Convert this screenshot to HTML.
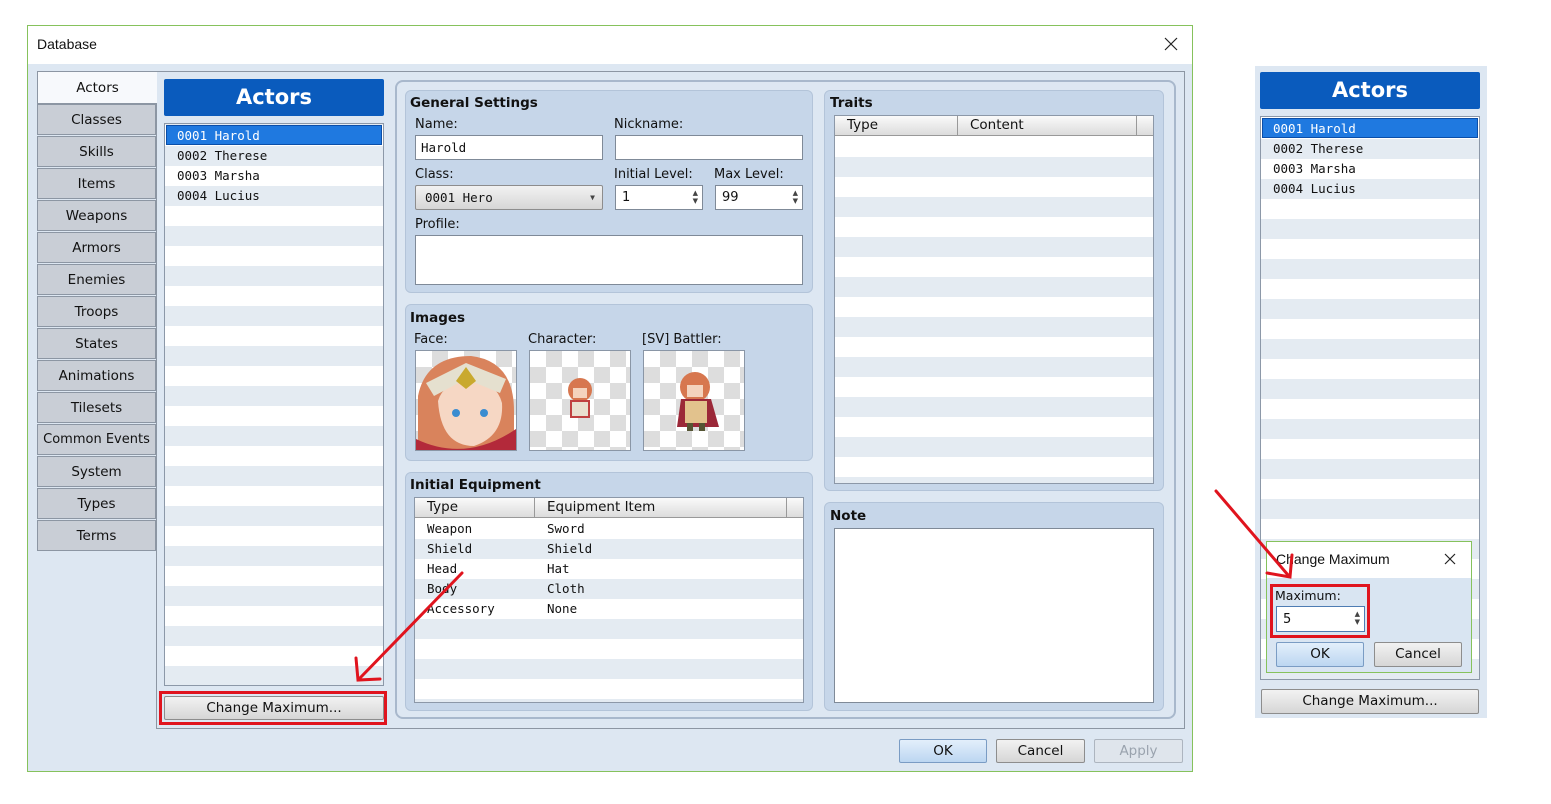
<!DOCTYPE html>
<html><head><meta charset="utf-8"><style>
*{box-sizing:border-box;margin:0;padding:0}
body{width:1551px;height:804px;background:#fff;position:relative;overflow:hidden;font-family:"DejaVu Sans","Liberation Sans",sans-serif;font-size:13px;color:#111}
.a{position:absolute}
.mono{font-family:"DejaVu Sans Mono","Liberation Mono",monospace;font-size:12.5px}
.tab{position:absolute;left:37px;width:119px;height:31px;background:#c9ced6;border:1px solid #8c96a3;text-align:center;line-height:30px;font-size:13.5px}
.hdr{background:#0a5bbd;color:#fff;font-weight:bold;font-size:21px;text-align:center;border-radius:2px}
.list{background:repeating-linear-gradient(#fff 0 20px,#e4ebf2 20px 40px);border:1px solid #8c98a8}
.grp{background:#c6d6e9;border-radius:6px;border:1px solid #b3c4d9}
.gt{font-weight:bold;font-size:13.5px}
.inp{background:#fff;border:1px solid #7f8a98}
.btn{background:linear-gradient(#f2f2f2,#d6d6d6);border:1px solid #8d8d8d;text-align:center;font-size:13.5px;border-radius:2px}
.bb{background:linear-gradient(#e3effb,#bcd6f1);border:1px solid #7a9cc4}
.th{background:linear-gradient(#fafafa,#dcdcdc);border-bottom:1px solid #999;height:20px;font-size:13.5px}
.spin{position:absolute;right:4px;top:3px;font-size:7px;line-height:8px;color:#444}
.chk{background-color:#fff;background-image:linear-gradient(45deg,#ddd 25%,transparent 25%,transparent 75%,#ddd 75%),linear-gradient(45deg,#ddd 25%,transparent 25%,transparent 75%,#ddd 75%);background-size:32px 32px;background-position:0 0,16px 16px;border:1px solid #8a96a6}
</style></head><body>
<div class="a" style="left:27px;top:25px;width:1166px;height:747px;border:1px solid #86c25c;background:#dde7f2"></div>
<div class="a" style="left:28px;top:26px;width:1164px;height:38px;background:#fff"></div>
<div class="a" style="left:37px;top:36px;font-size:14px;font-family:'Liberation Sans',sans-serif">Database</div>
<svg class="a" style="left:1164px;top:37px" width="14" height="14"><path d="M1 1L13 13M13 1L1 13" stroke="#222" stroke-width="1.2"/></svg>
<div class="a" style="left:156px;top:71px;width:1029px;height:658px;border:1px solid #8c96a3;background:#dde7f2"></div>
<div class="a" style="left:37px;top:71px;width:120px;height:33px;background:#f7f9fc;border:1px solid #8c96a3;border-right:none;text-align:center;line-height:32px;font-size:13.5px">Actors</div>
<div class="tab" style="top:104px">Classes</div>
<div class="tab" style="top:136px">Skills</div>
<div class="tab" style="top:168px">Items</div>
<div class="tab" style="top:200px">Weapons</div>
<div class="tab" style="top:232px">Armors</div>
<div class="tab" style="top:264px">Enemies</div>
<div class="tab" style="top:296px">Troops</div>
<div class="tab" style="top:328px">States</div>
<div class="tab" style="top:360px">Animations</div>
<div class="tab" style="top:392px">Tilesets</div>
<div class="tab" style="top:424px;font-size:13px">Common Events</div>
<div class="tab" style="top:456px">System</div>
<div class="tab" style="top:488px">Types</div>
<div class="tab" style="top:520px">Terms</div>
<div class="a hdr" style="left:164px;top:79px;width:220px;height:37px;line-height:37px">Actors</div>
<div class="a list" style="left:164px;top:123px;width:220px;height:563px;background-position:0 2px"></div>
<div class="a" style="left:166px;top:125px;width:216px;height:20px;background:#1f79e0;border:1px solid #0a4ea8"></div>
<div class="a mono" style="left:177px;top:126px;line-height:20px;color:#fff">0001 Harold</div>
<div class="a mono" style="left:177px;top:146px;line-height:20px">0002 Therese<br>0003 Marsha<br>0004 Lucius</div>
<div class="a btn" style="left:164px;top:696px;width:220px;height:24px;line-height:22px">Change Maximum...</div>
<div class="a" style="left:159px;top:691px;width:228px;height:34px;border:3px solid #e0141e"></div>
<div class="a" style="left:395px;top:80px;width:781px;height:639px;border:2px solid #a8b8cc;border-radius:8px;background:#dde7f2"></div>
<div class="a grp" style="left:405px;top:90px;width:408px;height:203px"></div>
<div class="a gt" style="left:410px;top:95px">General Settings</div>
<div class="a" style="left:415px;top:117px">Name:</div>
<div class="a" style="left:614px;top:117px">Nickname:</div>
<div class="a inp mono" style="left:415px;top:135px;width:188px;height:25px;line-height:24px;padding-left:5px">Harold</div>
<div class="a inp" style="left:615px;top:135px;width:188px;height:25px"></div>
<div class="a" style="left:415px;top:167px">Class:</div>
<div class="a" style="left:614px;top:167px">Initial Level:</div>
<div class="a" style="left:714px;top:167px">Max Level:</div>
<div class="a btn mono" style="left:415px;top:185px;width:188px;height:25px;line-height:24px;text-align:left;padding-left:9px;font-size:12.5px">0001 Hero<span style="position:absolute;right:7px;font-size:8px;color:#444">▼</span></div>
<div class="a inp" style="left:615px;top:185px;width:88px;height:25px;line-height:24px;padding-left:6px">1<div class="spin">▲<br>▼</div></div>
<div class="a inp" style="left:715px;top:185px;width:88px;height:25px;line-height:24px;padding-left:6px">99<div class="spin">▲<br>▼</div></div>
<div class="a" style="left:415px;top:217px">Profile:</div>
<div class="a inp" style="left:415px;top:235px;width:388px;height:50px"></div>
<div class="a grp" style="left:405px;top:304px;width:408px;height:157px"></div>
<div class="a gt" style="left:410px;top:310px">Images</div>
<div class="a" style="left:414px;top:332px">Face:</div>
<div class="a" style="left:528px;top:332px">Character:</div>
<div class="a" style="left:642px;top:332px">[SV] Battler:</div>
<div class="a chk" style="left:415px;top:350px;width:102px;height:101px;overflow:hidden">
<svg width="100" height="100" viewBox="0 0 100 100"><path d="M2 45 Q10 5 55 5 Q98 10 98 60 L98 100 L2 100 Z" fill="#d9835c"/><path d="M22 50 Q25 95 58 95 Q88 85 86 52 Q80 30 55 30 Q28 30 22 50Z" fill="#f6d7c4"/><path d="M10 32 L50 12 L90 28 L84 42 L50 28 L18 45Z" fill="#e5e0cf"/><path d="M40 30 L50 16 L60 30 L50 38Z" fill="#c9a92e"/><path d="M0 88 Q50 112 100 78 L100 100 L0 100Z" fill="#b3293a"/><circle cx="40" cy="62" r="4" fill="#3a8cd0"/><circle cx="68" cy="62" r="4" fill="#3a8cd0"/></svg></div>
<div class="a chk" style="left:529px;top:350px;width:102px;height:101px"><svg class="a" style="left:30px;top:25px" width="40" height="50"><circle cx="20" cy="14" r="12" fill="#d7774f"/><rect x="13" y="12" width="14" height="10" fill="#f4d3bd"/><rect x="10" y="24" width="20" height="18" fill="#c04040"/><rect x="12" y="26" width="16" height="14" fill="#e9dfcf"/></svg></div>
<div class="a chk" style="left:643px;top:350px;width:102px;height:101px"><svg class="a" style="left:25px;top:18px" width="55" height="65"><circle cx="26" cy="18" r="15" fill="#d7774f"/><rect x="18" y="16" width="16" height="12" fill="#f4d3bd"/><path d="M12 30 L42 30 L50 58 L8 58Z" fill="#9b2838"/><rect x="16" y="32" width="22" height="22" fill="#e2c28d"/><rect x="18" y="54" width="6" height="8" fill="#553"/><rect x="30" y="54" width="6" height="8" fill="#553"/></svg></div>
<div class="a grp" style="left:405px;top:472px;width:408px;height:239px"></div>
<div class="a gt" style="left:410px;top:477px">Initial Equipment</div>
<div class="a list" style="left:414px;top:497px;width:390px;height:206px;background-position:0 21px"></div>
<div class="a th" style="left:415px;top:498px;width:388px"><span class="a" style="left:12px;top:1px">Type</span><span class="a" style="left:132px;top:1px">Equipment Item</span><span class="a" style="left:119px;top:0;height:20px;border-left:1px solid #999"></span><span class="a" style="left:371px;top:0;height:20px;border-left:1px solid #999"></span></div>
<div class="a mono" style="left:427px;top:519px;line-height:20px">Weapon<br>Shield<br>Head<br>Body<br>Accessory</div>
<div class="a mono" style="left:547px;top:519px;line-height:20px">Sword<br>Shield<br>Hat<br>Cloth<br>None</div>
<div class="a grp" style="left:824px;top:90px;width:340px;height:401px"></div>
<div class="a gt" style="left:830px;top:95px">Traits</div>
<div class="a list" style="left:834px;top:115px;width:320px;height:369px;background-position:0 21px"></div>
<div class="a th" style="left:835px;top:116px;width:318px"><span class="a" style="left:12px;top:1px">Type</span><span class="a" style="left:135px;top:1px">Content</span><span class="a" style="left:122px;top:0;height:20px;border-left:1px solid #999"></span><span class="a" style="left:301px;top:0;height:20px;border-left:1px solid #999"></span></div>
<div class="a grp" style="left:824px;top:502px;width:340px;height:209px"></div>
<div class="a gt" style="left:830px;top:508px">Note</div>
<div class="a inp" style="left:834px;top:528px;width:320px;height:175px"></div>
<div class="a btn bb" style="left:899px;top:739px;width:88px;height:24px;line-height:22px">OK</div>
<div class="a btn" style="left:996px;top:739px;width:89px;height:24px;line-height:22px">Cancel</div>
<div class="a btn" style="left:1094px;top:739px;width:89px;height:24px;line-height:22px;color:#9aa3ae;background:#dfe5ec;border-color:#adb5bf">Apply</div>
<div class="a" style="left:1255px;top:66px;width:232px;height:652px;background:#dde7f2"></div>
<div class="a hdr" style="left:1260px;top:72px;width:220px;height:37px;line-height:37px">Actors</div>
<div class="a list" style="left:1260px;top:116px;width:220px;height:564px;background-position:0 2px"></div>
<div class="a" style="left:1262px;top:118px;width:216px;height:20px;background:#1f79e0;border:1px solid #0a4ea8"></div>
<div class="a mono" style="left:1273px;top:119px;line-height:20px;color:#fff">0001 Harold</div>
<div class="a mono" style="left:1273px;top:139px;line-height:20px">0002 Therese<br>0003 Marsha<br>0004 Lucius</div>
<div class="a btn" style="left:1261px;top:689px;width:218px;height:25px;line-height:23px">Change Maximum...</div>
<div class="a" style="left:1266px;top:541px;width:206px;height:132px;border:1px solid #86c25c;background:#d9e5f2"></div>
<div class="a" style="left:1267px;top:542px;width:204px;height:36px;background:#fff"></div>
<div class="a" style="left:1276px;top:551px;font-size:14px;font-family:'Liberation Sans',sans-serif">Change Maximum</div>
<svg class="a" style="left:1444px;top:553px" width="12" height="12"><path d="M1 1L11 11M11 1L1 11" stroke="#222" stroke-width="1.2"/></svg>
<div class="a" style="left:1275px;top:588px;font-size:12.5px">Maximum:</div>
<div class="a inp" style="left:1276px;top:606px;width:89px;height:26px;line-height:25px;padding-left:6px;border-color:#4e7cb3">5<div class="spin">▲<br>▼</div></div>
<div class="a" style="left:1270px;top:584px;width:100px;height:54px;border:3px solid #e0141e"></div>
<div class="a btn bb" style="left:1276px;top:642px;width:88px;height:25px;line-height:23px">OK</div>
<div class="a btn" style="left:1374px;top:642px;width:88px;height:25px;line-height:23px">Cancel</div>
<svg class="a" style="left:0;top:0" width="1551" height="804">
<g stroke="#e0141e" stroke-width="3" fill="none" stroke-linecap="round">
<line x1="462" y1="573" x2="360" y2="678"/><polyline points="356,658 358,680 380,679"/>
<line x1="1216" y1="491" x2="1288" y2="575"/><polyline points="1267,573 1290,577 1292,555"/>
</g></svg>
</body></html>
